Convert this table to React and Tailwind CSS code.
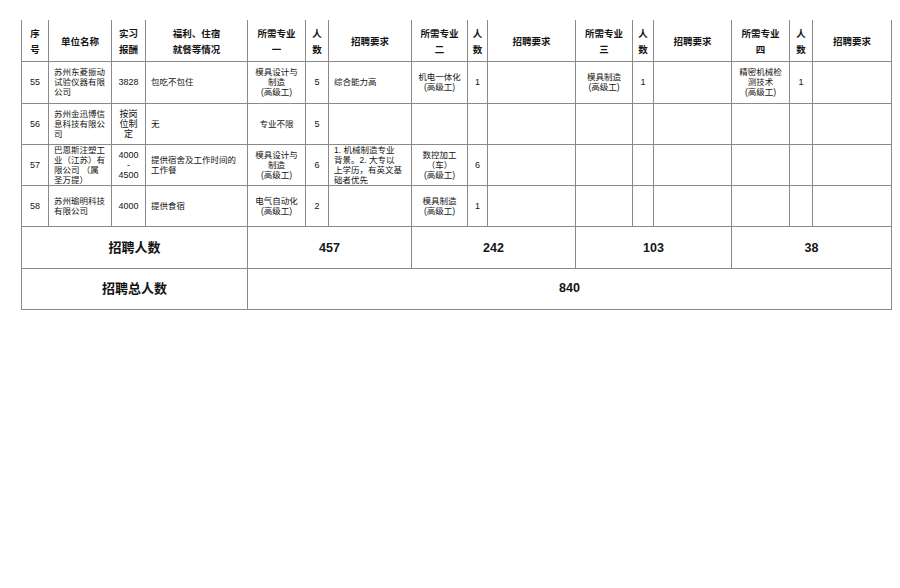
export default function App() {
  const cols = [27, 63, 34, 102, 58, 23, 83, 56, 20, 88, 57, 21, 78, 58, 23, 79];
  const b = "border border-[#8a8a8a]";
  const th = `${b} border-t-0 font-bold text-[9.5px] leading-[16px] text-center align-middle px-[2px] pt-[3px]`;
  const td = `${b} text-[8.5px] leading-[10px] align-middle`;
  const c = `${td} text-center px-[2px]`;
  const l = `${td} text-left pl-[5px] pr-[2px]`;
  const rows = [
    {
      no: "55",
      name: ["苏州东菱振动", "试验仪器有限", "公司"],
      pay: ["3828"],
      wel: ["包吃不包住"],
      m1: ["模具设计与", "制造", "(高级工)"], n1: "5", r1: ["综合能力高"],
      m2: ["机电一体化", "(高级工)"], n2: "1",
      m3: ["模具制造", "(高级工)"], n3: "1",
      m4: ["精密机械检", "测技术", "(高级工)"], n4: "1",
    },
    {
      no: "56",
      name: ["苏州金迅博信", "息科技有限公", "司"],
      pay: ["按岗", "位制", "定"],
      wel: ["无"],
      m1: ["专业不限"], n1: "5", r1: [],
      m2: [], n2: "", m3: [], n3: "", m4: [], n4: "",
    },
    {
      no: "57",
      name: ["巴恩斯注塑工", "业（江苏）有", "限公司 （属", "圣万提）"],
      pay: ["4000", "-", "4500"],
      wel: ["提供宿舍及工作时间的", "工作餐"],
      m1: ["模具设计与", "制造", "(高级工)"], n1: "6",
      r1: ["1. 机械制造专业", "背景。2. 大专以", "上学历，有英文基", "础者优先"],
      m2: ["数控加工", "（车）", "(高级工)"], n2: "6",
      m3: [], n3: "", m4: [], n4: "",
    },
    {
      no: "58",
      name: ["苏州瑜明科技", "有限公司"],
      pay: ["4000"],
      wel: ["提供食宿"],
      m1: ["电气自动化", "(高级工)"], n1: "2", r1: [],
      m2: ["模具制造", "(高级工)"], n2: "1",
      m3: [], n3: "", m4: [], n4: "",
    },
  ];
  const lines = (arr) =>
    arr.map((s, i) => (
      <span key={i} className="block whitespace-nowrap">
        {s}
      </span>
    ));
  return (
    <div
      className="w-[900px] h-[588px] bg-white pt-[20px] pl-[21px] text-[#141414]"
      style={{ fontFamily: '"Liberation Sans", "Noto Sans CJK SC", sans-serif' }}
    >
      <table className="table-fixed border-collapse w-[870px]">
        <colgroup>
          {cols.map((w, i) => (
            <col key={i} style={{ width: w }} />
          ))}
        </colgroup>
        <tbody>
          <tr className="h-[41px]">
            <th className={th}>{lines(["序", "号"])}</th>
            <th className={th}>单位名称</th>
            <th className={th}>{lines(["实习", "报酬"])}</th>
            <th className={th}>{lines(["福利、住宿", "就餐等情况"])}</th>
            <th className={th}>{lines(["所需专业", "一"])}</th>
            <th className={th}>{lines(["人", "数"])}</th>
            <th className={th}>招聘要求</th>
            <th className={th}>{lines(["所需专业", "二"])}</th>
            <th className={th}>{lines(["人", "数"])}</th>
            <th className={th}>招聘要求</th>
            <th className={th}>{lines(["所需专业", "三"])}</th>
            <th className={th}>{lines(["人", "数"])}</th>
            <th className={th}>招聘要求</th>
            <th className={th}>{lines(["所需专业", "四"])}</th>
            <th className={th}>{lines(["人", "数"])}</th>
            <th className={th}>招聘要求</th>
          </tr>
          {rows.map((r, i) => (
            <tr key={r.no} className={i === 0 ? "h-[42px]" : "h-[41px]"}>
              <td className={`${c} text-[9px]`}>{r.no}</td>
              <td className={l}>{lines(r.name)}</td>
              <td className={`${c} text-[9px]`}>{lines(r.pay)}</td>
              <td className={l}>{lines(r.wel)}</td>
              <td className={c}>{lines(r.m1)}</td>
              <td className={`${c} text-[9px]`}>{r.n1}</td>
              <td className={l}>{lines(r.r1)}</td>
              <td className={c}>{lines(r.m2)}</td>
              <td className={`${c} text-[9px]`}>{r.n2}</td>
              <td className={l}></td>
              <td className={c}>{lines(r.m3)}</td>
              <td className={`${c} text-[9px]`}>{r.n3}</td>
              <td className={l}></td>
              <td className={c}>{lines(r.m4)}</td>
              <td className={`${c} text-[9px]`}>{r.n4}</td>
              <td className={l}></td>
            </tr>
          ))}
          <tr className="h-[42px]">
            <td colSpan={4} className={`${b} text-center font-bold text-[13px] pt-[2px]`}>
              招聘人数
            </td>
            <td colSpan={3} className={`${b} text-center font-bold text-[12.5px] pt-[2px]`}>
              457
            </td>
            <td colSpan={3} className={`${b} text-center font-bold text-[12.5px] pt-[2px]`}>
              242
            </td>
            <td colSpan={3} className={`${b} text-center font-bold text-[12.5px] pt-[2px]`}>
              103
            </td>
            <td colSpan={3} className={`${b} text-center font-bold text-[12.5px] pt-[2px]`}>
              38
            </td>
          </tr>
          <tr className="h-[41px]">
            <td colSpan={4} className={`${b} text-center font-bold text-[13px]`}>
              招聘总人数
            </td>
            <td colSpan={12} className={`${b} text-center font-bold text-[12.5px]`}>
              840
            </td>
          </tr>
        </tbody>
      </table>
    </div>
  );
}
